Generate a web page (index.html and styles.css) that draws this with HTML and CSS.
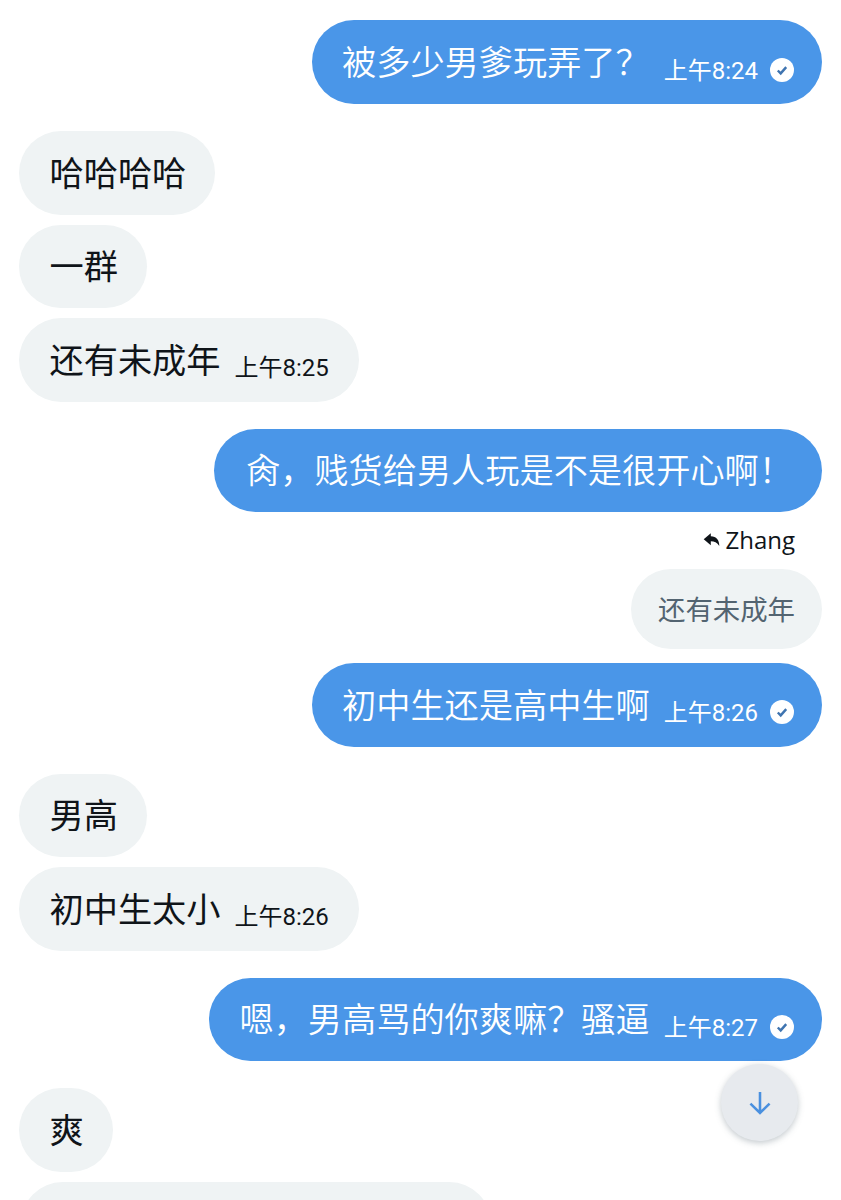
FILE: index.html
```html
<!DOCTYPE html>
<html lang="zh-CN">
<head>
<meta charset="utf-8">
<title>Chat</title>
<link rel="stylesheet" href="styles.css">
</head>
<body>
<main class="chat">
  <div class="row out first"><div class="bubble sent"><span class="text">被多少男爹玩弄了&#xFF1F;</span><span class="time">上午8:24</span><svg class="check" viewBox="0 0 24 24"><circle cx="12" cy="12" r="12" fill="#fff"/><path d="M7.800 12.500l2.900 2.900 5.500-6.300" fill="none" stroke="#3f74b0" stroke-width="2.400"/></svg></div></div>

  <div class="row in group"><div class="bubble recv"><span class="text">哈哈哈哈</span></div></div>
  <div class="row in near"><div class="bubble recv"><span class="text">一群</span></div></div>
  <div class="row in near"><div class="bubble recv"><span class="text">还有未成年</span><span class="time">上午8:25</span></div></div>

  <div class="row out group"><div class="bubble sent plain"><span class="text">肏&#xFF0C;贱货给男人玩是不是很开心啊&#xFF01;</span></div></div>

  <div class="reply-label"><svg class="reply-icon" viewBox="0 0 24 24"><path d="M11 3L1 11.500l10 8.500v-5.500c5 0 9 1.500 12 6.500 0-8-4-13.500-12-13.500z" fill="#0f1419"/></svg><span>Zhang</span></div>
  <div class="row out quote-row"><div class="bubble quote"><span class="quote-text">还有未成年</span></div></div>
  <div class="row out after-quote"><div class="bubble sent"><span class="text">初中生还是高中生啊</span><span class="time">上午8:26</span><svg class="check" viewBox="0 0 24 24"><circle cx="12" cy="12" r="12" fill="#fff"/><path d="M7.800 12.500l2.900 2.900 5.500-6.300" fill="none" stroke="#3f74b0" stroke-width="2.400"/></svg></div></div>

  <div class="row in group"><div class="bubble recv"><span class="text">男高</span></div></div>
  <div class="row in near"><div class="bubble recv"><span class="text">初中生太小</span><span class="time">上午8:26</span></div></div>

  <div class="row out group"><div class="bubble sent"><span class="text">嗯&#xFF0C;男高骂的你爽嘛&#xFF1F;骚逼</span><span class="time">上午8:27</span><svg class="check" viewBox="0 0 24 24"><circle cx="12" cy="12" r="12" fill="#fff"/><path d="M7.800 12.500l2.900 2.900 5.500-6.300" fill="none" stroke="#3f74b0" stroke-width="2.400"/></svg></div></div>

  <div class="row in group"><div class="bubble recv"><span class="text">爽</span></div></div>
  <div class="row in near"><div class="bubble recv last"></div></div>
</main>
<button class="scroll-down" aria-label="Scroll down"><svg viewBox="0 0 24 24"><path d="M12 2.500v18M3.800 12.500L12 20.500l8.200-8" fill="none" stroke="#4a90df" stroke-width="2.200"/></svg></button>
</body>
</html>
```

FILE: styles.css
```css
html, body {
  margin: 0;
  height: 1200px;
  overflow: hidden;
  background: #fff;
}
body {
  position: relative;
  font-family: "Noto Sans CJK SC", "Noto Sans", sans-serif;
}
.chat {
  display: flex;
  flex-direction: column;
  height: 1180px;
  overflow: hidden;
  padding: 20px 19px 0;
}
.row { display: flex; flex: none; }
.row.out { justify-content: flex-end; }
.row.in { justify-content: flex-start; }
.row.group { margin-top: 27px; }
.row.near { margin-top: 10px; }
.bubble {
  display: flex;
  align-items: center;
  box-sizing: border-box;
  height: 83.500px;
  border-radius: 42px;
  padding: 0 29px 0 30.500px;
  white-space: nowrap;
}
.first .bubble { height: 84px; }
.sent { background: #4a96e8; color: #fff; padding-right: 28px; }
.sent.plain { padding-left: 32px; padding-right: 29px; }
.recv { background: #eff3f4; color: #0f1419; }
.text {
  font-size: 34.200px;
  line-height: 40px;
  margin-top: -4px;
}
.sent .text { font-weight: 350; }
.time {
  font-family: Roboto, "Noto Sans CJK SC", sans-serif;
  font-size: 24px;
  line-height: 30px;
  margin-left: 14px;
  margin-top: 17px;
}
.recv .time { margin-right: 1.500px; }
.check {
  width: 24px;
  height: 24px;
  margin-left: 12px;
  margin-top: 15px;
}
.reply-label {
  display: flex;
  flex: none;
  align-items: center;
  justify-content: flex-end;
  height: 30px;
  margin-top: 12px;
  padding-right: 27px;
  font-family: "Open Sans", sans-serif;
  font-size: 24px;
  color: #0f1419;
}
.reply-icon { width: 17px; height: 17px; margin-right: 5px; }
.quote-row { margin-top: 15px; }
.after-quote { margin-top: 14px; }
.quote {
  height: 80px;
  border-radius: 40px;
  padding: 0 27px;
  background: #eff3f4;
  color: #536471;
}
.quote-text { font-size: 27.400px; line-height: 36px; margin-top: -3px; }
.last { width: 470px; margin-left: 2px; }
.scroll-down {
  position: absolute;
  left: 721px;
  top: 1064px;
  width: 77px;
  height: 77px;
  padding: 0;
  border: 0;
  border-radius: 50%;
  background: #e7eaee;
  box-shadow: 0 2px 6px rgba(83, 100, 113, 0.35);
  display: flex;
  align-items: center;
  justify-content: center;
}
.scroll-down svg { width: 28px; height: 28px; }
```
